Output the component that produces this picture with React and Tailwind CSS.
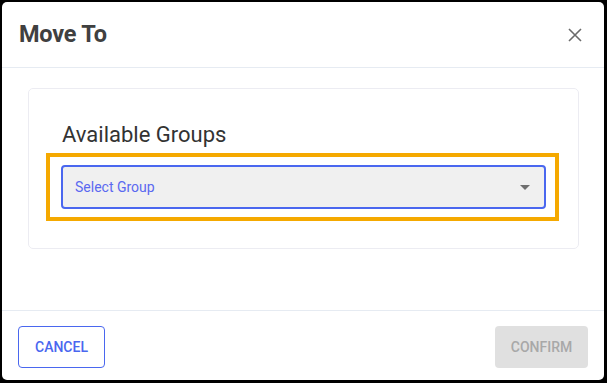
import React from "react";

export default function App() {
  return (
    <div
      className="w-[607px] h-[383px] bg-black pt-[2px] pl-[2px] pr-[3px] pb-[3px]"
      style={{ fontFamily: "Roboto, 'Liberation Sans', sans-serif" }}
    >
      <div className="w-full h-full bg-white rounded-[5px] flex flex-col overflow-hidden">
        {/* Header */}
        <div className="h-[66px] flex items-center justify-between pl-[17px] pr-[22px] border-b border-[#e6ebf2] shrink-0">
          <h2 className="text-[23.5px] font-bold text-[#404040] tracking-[-0.2px]">Move To</h2>
          <svg width="14" height="14" viewBox="0 0 14 14" className="text-[#6b6b6b]">
            <path d="M1 1 L13 13 M13 1 L1 13" stroke="currentColor" strokeWidth="1.6" fill="none" />
          </svg>
        </div>
        {/* Body */}
        <div className="flex-1 pt-[20px] pl-[26px] pr-[25px]">
          <div className="h-[161px] border border-[#ececf2] rounded-[5px] pt-[32px] pl-[17px] pr-[19px]">
            <div className="text-[22px] text-[#333333] leading-[28px] pl-[16px]">Available Groups</div>
            <div className="mt-[4px] border-4 border-[#f5a900] pt-[8px] pb-[8px] pl-[11px] pr-[9px]">
              <div className="h-[44px] bg-[#f0f0f0] border-2 border-[#4a67ef] rounded-[4px] flex items-center justify-between pl-[12px] pr-[14px]">
                <span className="text-[14px] text-[#5a69f0]">Select Group</span>
                <svg width="10" height="5" viewBox="0 0 10 5">
                  <path d="M0 0 L10 0 L5 5 Z" fill="#6e6e6e" />
                </svg>
              </div>
            </div>
          </div>
        </div>
        {/* Footer */}
        <div className="h-[70px] border-t border-[#e6ebf2] flex items-start justify-between pt-[15px] px-[16px] shrink-0">
          <button className="h-[42px] w-[87px] border border-[#4a67ef] rounded-[4px] text-[#4a67ef] text-[14px] font-medium">
            CANCEL
          </button>
          <button className="h-[42px] w-[93px] bg-[#e0e0e0] rounded-[4px] text-[#a8a8a8] text-[14px] font-medium">
            CONFIRM
          </button>
        </div>
      </div>
    </div>
  );
}
